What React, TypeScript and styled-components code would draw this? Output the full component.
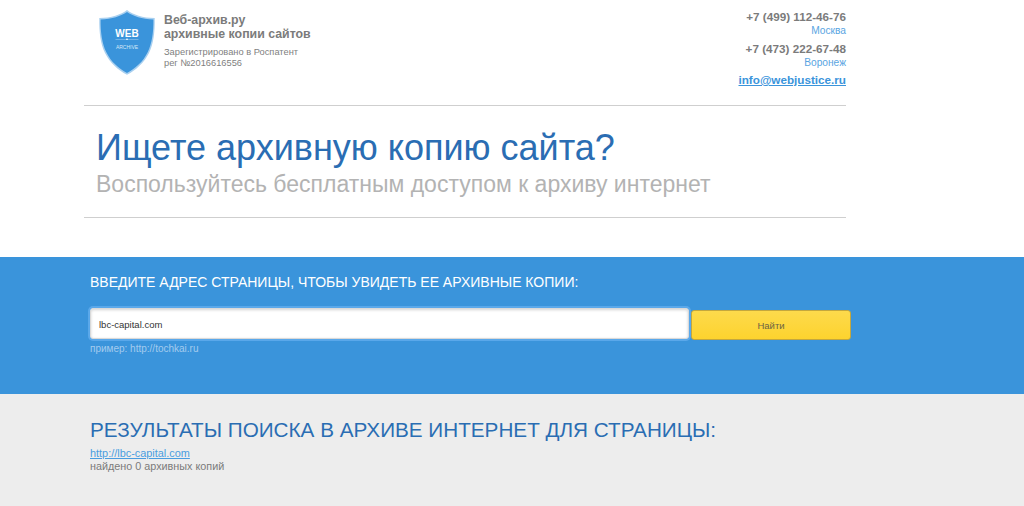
import React from "react";
import styled, { createGlobalStyle } from "styled-components";

const GlobalStyle = createGlobalStyle`
  html, body {
    margin: 0;
    padding: 0;
    background: #fff;
    font-family: "Liberation Sans", Arial, sans-serif;
    overflow: hidden;
  }
`;

const Page = styled.div`
  width: 1024px;
  height: 506px;
  display: flex;
  flex-direction: column;
`;

const Top = styled.div`
  width: 762px;
  margin-left: 84px;
  height: 218px;
  box-sizing: border-box;
  border-bottom: 1px solid #cfcfcf;
  margin-bottom: 39px;
`;

const Header = styled.header`
  height: 106px;
  box-sizing: border-box;
  border-bottom: 1px solid #cfcfcf;
  display: flex;
  justify-content: space-between;
`;

const Brand = styled.div`
  display: flex;
  padding: 10px 0 0 15px;
  gap: 9px;
`;

const BrandText = styled.div`
  padding-top: 3px;
`;

const BrandName = styled.div`
  font-size: 12.35px;
  line-height: 14px;
  font-weight: bold;
  color: #7b7b7b;
`;

const BrandNote = styled.div`
  margin-top: 6px;
  font-size: 9.3px;
  line-height: 11px;
  color: #7f7f7f;
`;

const Contacts = styled.div`
  display: flex;
  flex-direction: column;
  align-items: flex-end;
  padding-top: 10px;
`;

const Phone = styled.div`
  font-size: 11.7px;
  line-height: 14px;
  font-weight: bold;
  color: #7b7b7b;
`;

const City = styled.div`
  font-size: 10.2px;
  line-height: 14px;
  margin-bottom: 4px;
  color: #5aa5e2;
`;

const Mail = styled.a`
  margin-top: -1px;
  font-size: 11.7px;
  line-height: 14px;
  font-weight: bold;
  color: #3a94db;
  text-decoration: underline;
`;

const Hero = styled.div`
  padding: 20px 0 0 12px;
`;

const Title = styled.h1`
  margin: 0;
  font-size: 36px;
  line-height: 44px;
  font-weight: normal;
  color: #2a6db3;
`;

const Subtitle = styled.div`
  font-size: 23px;
  line-height: 28px;
  color: #b3b3b3;
`;

const SearchBand = styled.section`
  height: 137px;
  box-sizing: border-box;
  background: #3a94db;
  padding: 16px 0 0 90px;
`;

const SearchLabel = styled.div`
  font-size: 14px;
  line-height: 18px;
  color: #fff;
`;

const SearchRow = styled.div`
  display: flex;
  gap: 2px;
  margin-top: 17px;
`;

const SearchInput = styled.input`
  width: 599px;
  height: 31px;
  box-sizing: border-box;
  border: 1px solid #d9d9d9;
  border-radius: 3px;
  padding: 1px 8px 0;
  font-family: "Liberation Sans", Arial, sans-serif;
  font-size: 9.5px;
  color: #333;
  background: #fff;
  box-shadow: 0 0 0 2px #5aa8ea, inset 0 1px 3px rgba(0, 0, 0, 0.18);
  outline: none;
`;

const SearchButton = styled.button`
  width: 160px;
  height: 30px;
  box-sizing: border-box;
  border: 1px solid #c4a73d;
  border-radius: 3px;
  margin-top: 2px;
  background: linear-gradient(#fdda4c, #fdd32e);
  font-family: "Liberation Sans", Arial, sans-serif;
  font-size: 9.5px;
  color: #6b6343;
`;

const Hint = styled.div`
  margin-top: 3px;
  font-size: 10px;
  line-height: 12px;
  color: #a3cbee;
`;

const Results = styled.section`
  flex: 1;
  background: #ededed;
  padding: 23px 0 0 90px;
`;

const ResultsTitle = styled.h2`
  margin: 0;
  font-size: 20.7px;
  line-height: 26px;
  font-weight: normal;
  color: #2a6db3;
`;

const ResultLink = styled.a`
  display: block;
  margin-top: 4px;
  font-size: 10.9px;
  line-height: 13px;
  color: #4a9de0;
  text-decoration: underline;
`;

const ResultNote = styled.div`
  font-size: 10.8px;
  line-height: 13px;
  color: #7b7b7b;
`;

function Shield() {
  return (
    <svg width="56" height="65" viewBox="0 0 56 65">
      <path
        d="M28 0 C22 4.5 12 8 0.3 8 C0 22 1.5 34 6 43 C11 53 19 60 28 64.8 C37 60 45 53 50 43 C54.5 34 56 22 55.7 8 C44 8 34 4.5 28 0 Z"
        fill="#a9d0f0"
      />
      <path
        d="M28 2 C22 6 13 9.4 1.6 9.4 C1.4 22 3 33 7.2 42 C12 52 20 58.6 28 63 C36 58.6 44 52 48.8 42 C53 33 54.6 22 54.4 9.4 C43 9.4 34 6 28 2 Z"
        fill="#3a94db"
      />
      <text x="28" y="26.7" textAnchor="middle" fontFamily="Liberation Sans" fontSize="10" fontWeight="bold" fill="#fff">
        WEB
      </text>
      <rect x="16.5" y="29.1" width="23" height="0.5" fill="#a9d0f0" />
      <rect x="27.3" y="28.6" width="1.4" height="1.4" fill="#fff" />
      <text x="28" y="39.3" textAnchor="middle" fontFamily="Liberation Sans" fontSize="5" fill="#d5e8f8">
        ARCHIVE
      </text>
    </svg>
  );
}

export default function App() {
  return (
    <Page>
      <GlobalStyle />
      <Top>
        <Header>
          <Brand>
            <Shield />
            <BrandText>
              <BrandName>
                Веб-архив.ру
                <br />
                архивные копии сайтов
              </BrandName>
              <BrandNote>
                Зарегистрировано в Роспатент
                <br />
                рег №2016616556
              </BrandNote>
            </BrandText>
          </Brand>
          <Contacts>
            <Phone>+7 (499) 112-46-76</Phone>
            <City>Москва</City>
            <Phone>+7 (473) 222-67-48</Phone>
            <City>Воронеж</City>
            <Mail href="#">info@webjustice.ru</Mail>
          </Contacts>
        </Header>
        <Hero>
          <Title>Ищете архивную копию сайта?</Title>
          <Subtitle>Воспользуйтесь бесплатным доступом к архиву интернет</Subtitle>
        </Hero>
      </Top>
      <SearchBand>
        <SearchLabel>ВВЕДИТЕ АДРЕС СТРАНИЦЫ, ЧТОБЫ УВИДЕТЬ ЕЕ АРХИВНЫЕ КОПИИ:</SearchLabel>
        <SearchRow>
          <SearchInput defaultValue="lbc-capital.com" />
          <SearchButton>Найти</SearchButton>
        </SearchRow>
        <Hint>пример: http://tochkai.ru</Hint>
      </SearchBand>
      <Results>
        <ResultsTitle>РЕЗУЛЬТАТЫ ПОИСКА В АРХИВЕ ИНТЕРНЕТ ДЛЯ СТРАНИЦЫ:</ResultsTitle>
        <ResultLink href="#">http://lbc-capital.com</ResultLink>
        <ResultNote>найдено 0 архивных копий</ResultNote>
      </Results>
    </Page>
  );
}
